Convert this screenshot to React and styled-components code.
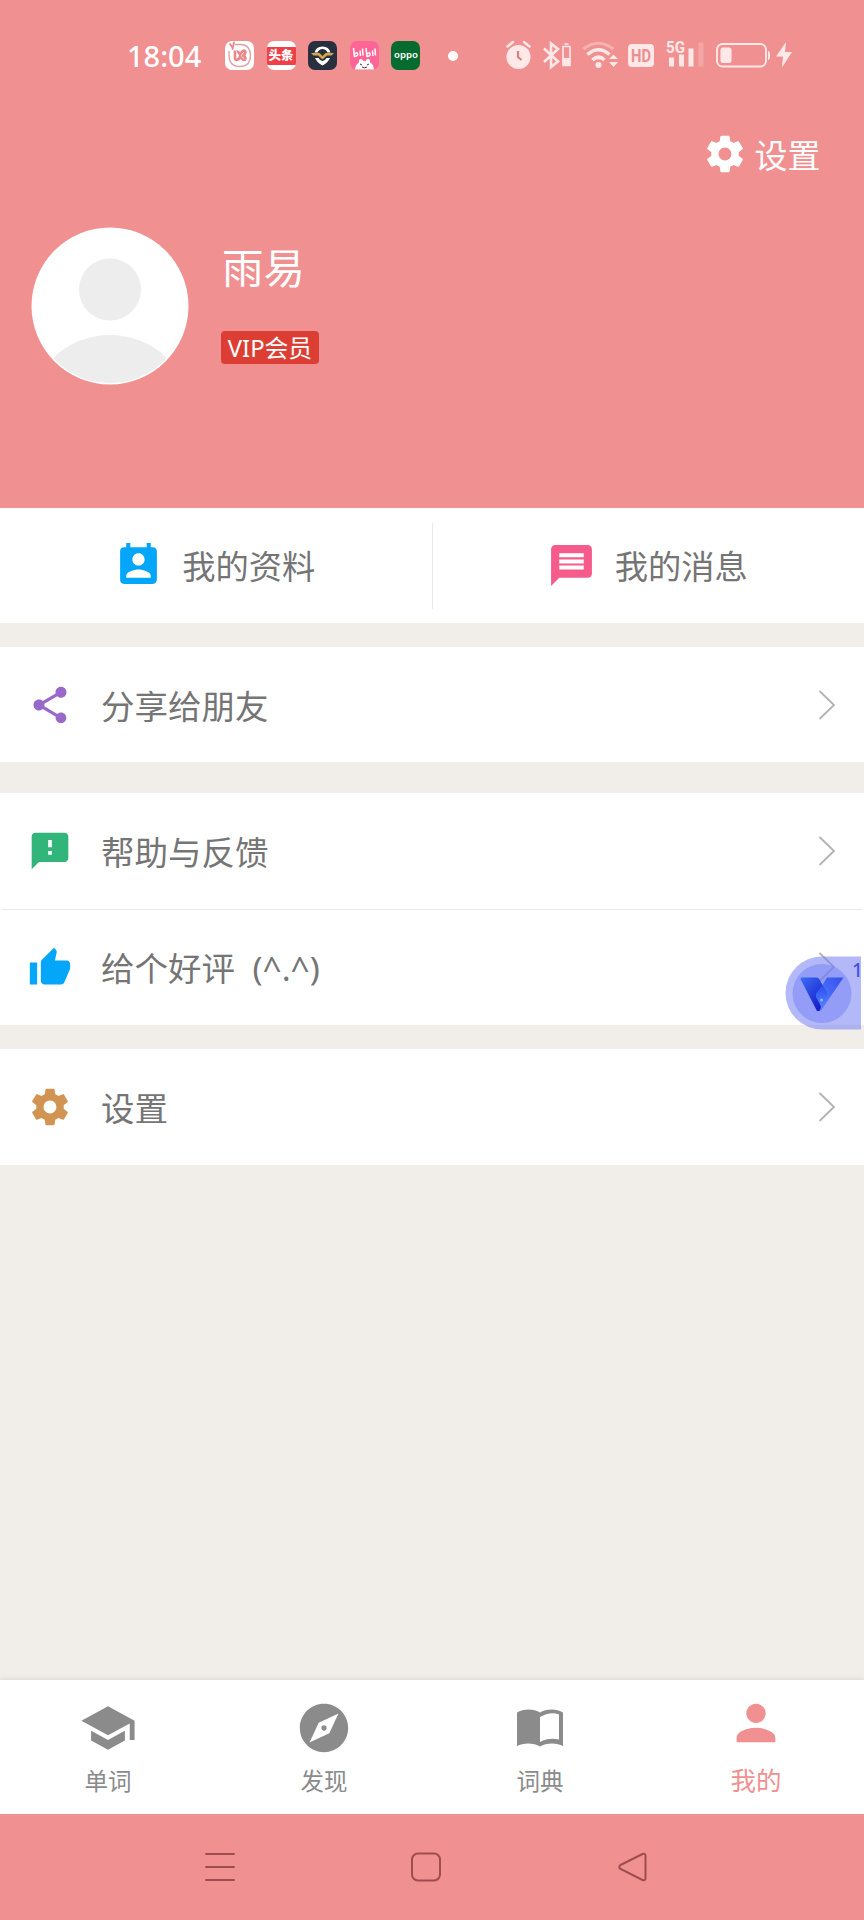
import styled, {createGlobalStyle} from "styled-components";
import {
    MdExplore,
    MdMessage,
    MdPermContactCalendar,
    MdPerson,
    MdSchool,
    MdShare,
} from "react-icons/md";

const GearIcon = () => (
    <svg viewBox="0 0 24 24" width="1em" height="1em" fill="currentColor">
        <path d="M19.43 12.98c.04-.32.07-.64.07-.98s-.03-.66-.07-.98l2.11-1.65c.19-.15.24-.42.12-.64l-2-3.46c-.12-.22-.39-.3-.61-.22l-2.49 1c-.52-.4-1.08-.73-1.69-.98l-.38-2.65C14.46 2.18 14.25 2 14 2h-4c-.25 0-.46.18-.49.42l-.38 2.65c-.61.25-1.17.59-1.69.98l-2.49-1c-.23-.09-.49 0-.61.22l-2 3.46c-.13.22-.07.49.12.64l2.11 1.65c-.04.32-.07.65-.07.98s.03.66.07.98l-2.11 1.65c-.19.15-.24.42-.12.64l2 3.46c.12.22.39.3.61.22l2.49-1c.52.4 1.08.73 1.69.98l.38 2.65c.03.24.24.42.49.42h4c.25 0 .46-.18.49-.42l.38-2.65c.61-.25 1.17-.59 1.69-.98l2.49 1c.23.09.49 0 .61-.22l2-3.46c.12-.22.07-.49-.12-.64l-2.11-1.65zM12 15.5c-1.93 0-3.5-1.57-3.5-3.5s1.57-3.5 3.5-3.5 3.5 1.57 3.5 3.5-1.57 3.5-3.5 3.5z"/>
    </svg>
);

const ThumbIcon = () => (
    <svg viewBox="0 -0.5 24 24" width="1em" height="1em" fill="currentColor">
        <path d="M1 21h4V9H1v12zm22-11c0-1.1-.9-2-2-2h-6.31l.95-4.57.03-.32c0-.41-.17-.79-.44-1.06L14.17 1 7.59 7.59C7.22 7.95 7 8.45 7 9v10c0 1.1.9 2 2 2h9c.83 0 1.54-.5 1.84-1.22l3.02-7.05c.09-.23.14-.47.14-.73v-2z"/>
    </svg>
);

const FeedbackIcon = () => (
    <svg viewBox="0 0 24 24" width="1em" height="1em" fill="currentColor">
        <path d="M20 2H4c-1.1 0-1.99.9-1.99 2L2 22l4-4h14c1.1 0 2-.9 2-2V4c0-1.1-.9-2-2-2zm-7 12h-2v-2h2v2zm0-4h-2V6h2v4z"/>
    </svg>
);

const BookIcon = () => (
    <svg viewBox="0 0 58 58" width="1em" height="1em" fill="currentColor">
        <path d="M6 13.500C12 9.500 23 9.500 29 13.500C35 9.500 46 9.500 52 13.500V47C46 43.500 35 43.500 29 47.500C23 43.500 12 43.500 6 47ZM29 18V43C35 39.500 42 39 48 40.500V15.500C42 13 35 14.500 29 18Z" fillRule="evenodd"/>
    </svg>
);

const groups = [
    {gap: 24, rows: [{icon: <MdShare/>, color: "#9968cb", label: "分享给朋友"}]},
    {
        gap: 31,
        rows: [
            {icon: <FeedbackIcon/>, color: "#31b57b", label: "帮助与反馈"},
            {icon: <ThumbIcon/>, color: "#03a6f8", label: "给个好评  (^.^)"},
        ],
    },
    {gap: 24, rows: [{icon: <GearIcon/>, color: "#d29453", label: "设置"}]},
];

const tabs = [
    {icon: <MdSchool/>, label: "单词"},
    {icon: <MdExplore/>, label: "发现"},
    {icon: <BookIcon/>, label: "词典"},
    {icon: <MdPerson/>, label: "我的", active: true},
];

const AppBadges = () => (
    <Badges>
        <svg width="29" height="29" viewBox="0 0 29 29">
            <rect width="29" height="29" rx="7" fill="#fff"/>
            <path d="M10 3.500H16C22 3.500 25.500 8 25.500 14.500S22 25.500 15 25.500S4 22 4 14V10" fill="none" stroke="#dfa3a5" strokeWidth="1.400"/>
            <path d="M10 9.500V17Q10 19 12 19Q14 18.500 15 15.500Q18 20 20 18.500Q21.500 16.500 18 14.500Q21.500 12 20 10Q18 8.500 15 13.500Q13 10 12 10.500" fill="none" stroke="#ee8587" strokeWidth="2.600" strokeLinejoin="round"/>
            <path d="M5 3L7 6M9 1.500L7.500 8" stroke="#ee8587" strokeWidth="1.800" strokeLinecap="round"/>
        </svg>
        <NewsBadge><span>头条</span></NewsBadge>
        <svg width="29" height="29" viewBox="0 0 29 29">
            <rect width="29" height="29" rx="7" fill="#283040"/>
            <path d="M6.500 11.500Q8 5.500 14.500 5.500T22.500 11.500H19.500Q18 8 14.500 8T9.500 11.500ZM7 17H10.500Q12 20 14.500 20T18.500 17H22Q20 21.500 14.500 24.500Q9 21.500 7 17Z" fill="#fff"/>
            <path d="M3 12H11.500L14.500 15L17.500 12H26L23.500 14.500H19L14.500 18.500L10 14.500H5.500Z" fill="#d5a548"/>
        </svg>
        <svg width="29" height="29" viewBox="0 0 29 29">
            <rect width="29" height="29" rx="7" fill="#ff6597"/>
            <path d="M3.500 7L4.500 15.500Q8.500 15 7.500 12.500Q6.500 11 4.500 13M10 9.500L10.500 15M12.500 7.500L13 14.500M16 7L17 15.500Q21 15 20 12.500Q19 11 17 13M22.500 9.500L23 15M25 7.500L25.500 14.500" fill="none" stroke="#fff" strokeWidth="1.500"/>
            <path d="M5 28.500C5.500 24 7.500 22.500 9 21.500C8 17 13 17 13 20H16C16 17 21 17 20 21.500C22 22.500 23.500 24 24 28.500Z" fill="#fff"/>
            <path d="M10 23L12 24M19 23L17 24M12 26Q14.500 27.500 17 26" stroke="#49313b" fill="none"/>
        </svg>
        <OppoBadge><span>oppo</span></OppoBadge>
    </Badges>
);

const StatusIcons = () => (
    <svg width="290" height="46" viewBox="0 -7.500 290 46" fill="#ffe9e8">
        <circle cx="12.500" cy="16.500" r="12"/>
        <path d="M1.500 6L7 1.500M18 1.500L23.500 6" stroke="#ffe9e8" strokeWidth="2.500" strokeLinecap="round"/>
        <path d="M12 10.500V16.500L15.500 19.500" fill="none" stroke="#d9817f" strokeWidth="2.200"/>
        <path d="M38 8L52 21L45 26.500V3L52 8.500L38 21.500" fill="none" stroke="#ffe9e8" strokeWidth="2.600"/>
        <path d="M57 6H64V25H57ZM58.500 3.500H62.500" fill="none" stroke="#ffe9e8" strokeWidth="1.600"/>
        <rect x="57" y="17.500" width="7" height="7.500"/>
        <path d="M77.500 8.500Q92 -3 107.500 8.500" fill="none" stroke="#f6b3b2" strokeWidth="3"/>
        <path d="M81.500 14Q92.500 4.500 103.500 14M86.500 19.500Q92.500 14 98.500 19.500" fill="none" stroke="#ffe9e8" strokeWidth="3.600"/>
        <circle cx="92.500" cy="24.500" r="3"/>
        <path d="M103 18.500L107.500 14L112 18.500ZM103 21.500H112L107.500 26.500Z"/>
        <rect x="122" y="3.500" width="26" height="23" rx="4"/>
        <text x="135" y="21.500" textAnchor="middle" fontFamily="Roboto" fontWeight="700" fontSize="18" textLength="20" lengthAdjust="spacingAndGlyphs" fill="#ec8f8e">HD</text>
        <text x="160" y="12.500" fontFamily="Roboto" fontWeight="700" fontSize="16" textLength="19" lengthAdjust="spacingAndGlyphs">5G</text>
        <path d="M163 17H168V26H163ZM173 14H178V26H173ZM182.500 8H187.500V26H182.500Z"/>
        <rect x="192.500" y="2" width="5" height="24" fill="#f4a6a5"/>
        <rect x="211" y="3.500" width="49" height="22.500" rx="5.500" fill="none" stroke="#ffe9e8" strokeWidth="1.900"/>
        <rect x="214.500" y="7" width="11" height="15.500" rx="2.500"/>
        <path d="M262 10.500Q264 10.500 264 15T262 19.500Z"/>
        <path d="M280 1.500L270 16H277L276 27L286 11.500H279Z"/>
    </svg>
);

const App = () => (
    <Screen>
        <GlobalStyle/>
        <Header>
            <StatusBar>
                <Clock>18:04</Clock>
                <AppBadges/>
                <Dot/>
                <StatusIcons/>
            </StatusBar>
            <SettingsLink>
                <GearIcon/>
                <span>设置</span>
            </SettingsLink>
            <Profile>
                <svg width="158" height="158" viewBox="0 0 158 158">
                    <clipPath id="avatar"><circle cx="79" cy="79" r="77"/></clipPath>
                    <circle cx="79" cy="79" r="78.500" fill="#fff"/>
                    <circle cx="79" cy="62.500" r="31" fill="#ededed"/>
                    <ellipse cx="79" cy="181" rx="78" ry="73" fill="#ededed" clipPath="url(#avatar)"/>
                </svg>
                <ProfileInfo>
                    <UserName>雨易</UserName>
                    <VipTag>VIP会员</VipTag>
                </ProfileInfo>
            </Profile>
        </Header>

        <Shortcuts>
            <Shortcut $color="#03a6f8"><MdPermContactCalendar/><span>我的资料</span></Shortcut>
            <Divider/>
            <Shortcut $color="#f55b8b"><MdMessage/><span>我的消息</span></Shortcut>
        </Shortcuts>

        {groups.map((group, i) => (
            <MenuGroup key={i} $gap={group.gap}>
                {group.rows.map((row) => (
                    <MenuRow key={row.label} $color={row.color}>
                        {row.icon}
                        <span>{row.label}</span>
                        <Chevron viewBox="0 0 18 30"><path d="M1.500 1L16 15L1.500 29"/></Chevron>
                    </MenuRow>
                ))}
            </MenuGroup>
        ))}

        <TabBar>
            {tabs.map((tab) => (
                <Tab key={tab.label} $active={tab.active}>
                    {tab.icon}
                    <span>{tab.label}</span>
                </Tab>
            ))}
        </TabBar>

        <SystemBar>
            <svg width="30" height="30" viewBox="0 0 30 30"><path d="M1 2H29M1 15H29M1 28H29"/></svg>
            <svg width="30" height="30" viewBox="0 0 30 30"><rect x="1" y="1.500" width="28" height="27" rx="6"/></svg>
            <svg width="30" height="30" viewBox="0 0 30 30"><path d="M3.500 13L25.500 2Q28.500 1 28.500 4V26Q28.500 29 25.500 28L3.500 17Q1 15 3.500 13Z"/></svg>
        </SystemBar>

        <FloatingBall>
            <svg width="84" height="90" viewBox="0 0 84 90">
                <defs>
                    <linearGradient id="left" x1="0" y1="0" x2="0.700" y2="1">
                        <stop offset="0" stopColor="#3c6cf7"/>
                        <stop offset="1" stopColor="#1620c8"/>
                    </linearGradient>
                    <linearGradient id="right" x1="1" y1="0" x2="0" y2="1">
                        <stop offset="0" stopColor="#3450ee"/>
                        <stop offset="1" stopColor="#5b84fb"/>
                    </linearGradient>
                    <linearGradient id="drop" x1="0" y1="0" x2="0" y2="1">
                        <stop offset="0" stopColor="#2c4cf0"/>
                        <stop offset="1" stopColor="#4a7dfb"/>
                    </linearGradient>
                </defs>
                <path d="M81 11.500H42A36.500 36.500 0 0 0 42 84.500H81Z" fill="#7480f3" fillOpacity="0.550"/>
                <circle cx="42" cy="48.500" r="29.500" fill="#7480f3" fillOpacity="0.500"/>
                <path d="M47 32.500H63.500L41 65.500H38L35 52Z" fill="url(#right)"/>
                <path d="M21 32.500H36Q39 32.500 40 35.500L43 41L36 50L41 62L39.500 66H37L20.500 34Z" fill="url(#left)"/>
                <path d="M42.500 40L47 47Q48 50 46 53L42 60Q38 57 36 52Q35 49 37 47Z" fill="url(#drop)"/>
                <circle cx="41.500" cy="55" r="1.500" fill="#98b6ff"/>
            </svg>
            <BallCount>1</BallCount>
        </FloatingBall>
    </Screen>
);

const GlobalStyle = createGlobalStyle`
    body {
        margin: 0;
        font-family: "Noto Sans", "Noto Sans CJK SC", sans-serif;
    }

    svg {
        display: block;
        flex-shrink: 0;
    }
`;

const Screen = styled.div`
    position: relative;
    width: 864px;
    height: 1920px;

    display: flex;
    flex-direction: column;

    background-color: #f1eeea;
    overflow: hidden;
`;

const Header = styled.header`
    height: 508px;
    box-sizing: border-box;
    padding-top: 31px;

    color: white;
    background-color: #f09090;
`;

const StatusBar = styled.div`
    height: 50px;
    padding-left: 127px;

    display: flex;
    align-items: center;
`;

const Clock = styled.div`
    width: 98px;

    font-size: 29px;
    font-weight: 500;
    line-height: 50px;
`;

const Badges = styled.div`
    display: flex;
    padding-bottom: 1px;
    gap: 12.6px;
`;

const Badge = styled.div`
    width: 29px;
    height: 29px;
    border-radius: 7px;
    overflow: hidden;

    display: flex;
    align-items: center;
    justify-content: center;
`;

const NewsBadge = styled(Badge)`
    background-color: white;

    span {
        width: 29px;

        color: white;
        background-color: #ee4046;
        font-size: 12.5px;
        font-weight: 900;
        line-height: 18px;
        text-align: center;
    }
`;

const OppoBadge = styled(Badge)`
    background-color: #056b2e;
    font-family: "Noto Sans", sans-serif;
    font-size: 8px;
    font-weight: 600;
    line-height: 20px;

    span {
        padding-bottom: 2px;
        transform: scaleX(1.2);
    }
`;

const Dot = styled.div`
    width: 10px;
    height: 10px;
    margin: 0 48px 1px 28px;
    border-radius: 50%;

    background-color: white;
`;

const SettingsLink = styled.div`
    height: 44px;
    margin-top: 51px;
    padding-right: 43.5px;

    display: flex;
    align-items: center;
    justify-content: flex-end;
    gap: 7.5px;

    font-size: 33px;
    line-height: 44px;

    svg {
        font-size: 44px;
    }

    span {
        padding-top: 3px;
    }
`;

const Profile = styled.div`
    margin-top: 51px;
    padding-left: 31px;

    display: flex;
    gap: 32px;
`;

const ProfileInfo = styled.div`
    padding-top: 15px;
`;

const UserName = styled.div`
    padding-left: 1px;

    font-size: 41.5px;
    line-height: 52px;
`;

const VipTag = styled.div`
    width: 98px;
    height: 33px;
    margin-top: 37px;
    border-radius: 4px;

    background-color: #dd3e34;
    font-size: 23.8px;
    line-height: 34px;
    text-align: center;
`;

const Shortcuts = styled.div`
    height: 115px;

    display: flex;
    align-items: center;

    background-color: white;
`;

const Shortcut = styled.div`
    flex: 1;
    height: 49px;
    padding-right: 2px;

    display: flex;
    align-items: center;
    justify-content: center;
    gap: 19px;

    color: #757575;
    font-size: 33.3px;
    line-height: 49px;

    svg {
        color: ${({$color}) => $color};
        font-size: 49px;
    }

    span {
        padding-top: 2px;
    }
`;

const Divider = styled.div`
    width: 1px;
    height: 86px;

    background-color: #e9e9e9;
`;

const MenuRow = styled.div`
    height: 115.4px;
    padding: 0 28px;

    display: flex;
    align-items: center;

    color: #757575;
    font-size: 33.5px;
    line-height: 44px;
    white-space: pre;

    & + & {
        margin: 0 2px;
        padding: 0 26px;
        border-top: 1px solid #e9e9e9;
    }

    > svg:first-child {
        color: ${({$color}) => $color};
        font-size: 44px;
    }

    span {
        flex: 1;
        padding: 2px 0 0 29px;
    }
`;

const MenuGroup = styled.div`
    margin-top: ${({$gap}) => $gap}px;

    background-color: white;
`;

const Chevron = styled.svg`
    width: 18px;
    height: 30px;

    fill: none;
    stroke: #b2b2b2;
    stroke-width: 1.8px;
`;

const TabBar = styled.nav`
    height: 134px;
    margin-top: auto;

    display: flex;

    background-color: white;
    box-shadow: 0 -1px 4px rgba(0, 0, 0, 0.1);
`;

const Tab = styled.div`
    flex: 1;
    padding-top: ${({$active}) => $active ? 14 : 19}px;

    display: flex;
    flex-direction: column;
    align-items: center;

    color: ${({$active}) => $active ? "#f09090" : "#8b8b8b"};
    font-size: ${({$active}) => $active ? 25.5 : 23.5}px;
    line-height: 36px;

    svg {
        font-size: 58px;
    }

    span {
        margin-top: ${({$active}) => $active ? 10 : 6}px;
    }
`;

const SystemBar = styled.div`
    height: 106px;
    padding-right: 12px;

    display: flex;
    align-items: center;
    justify-content: center;
    gap: 176px;

    background-color: #f09090;

    svg {
        fill: none;
        stroke: #9f4c4f;
        stroke-width: 2px;
        stroke-linecap: round;
    }
`;

const FloatingBall = styled.div`
    position: absolute;
    top: 945px;
    left: 780px;
`;

const BallCount = styled.span`
    position: absolute;
    top: 12px;
    left: 72px;

    color: #4650dd;
    font-size: 19px;
    font-weight: 500;
    line-height: 26px;
`;

export default App;
